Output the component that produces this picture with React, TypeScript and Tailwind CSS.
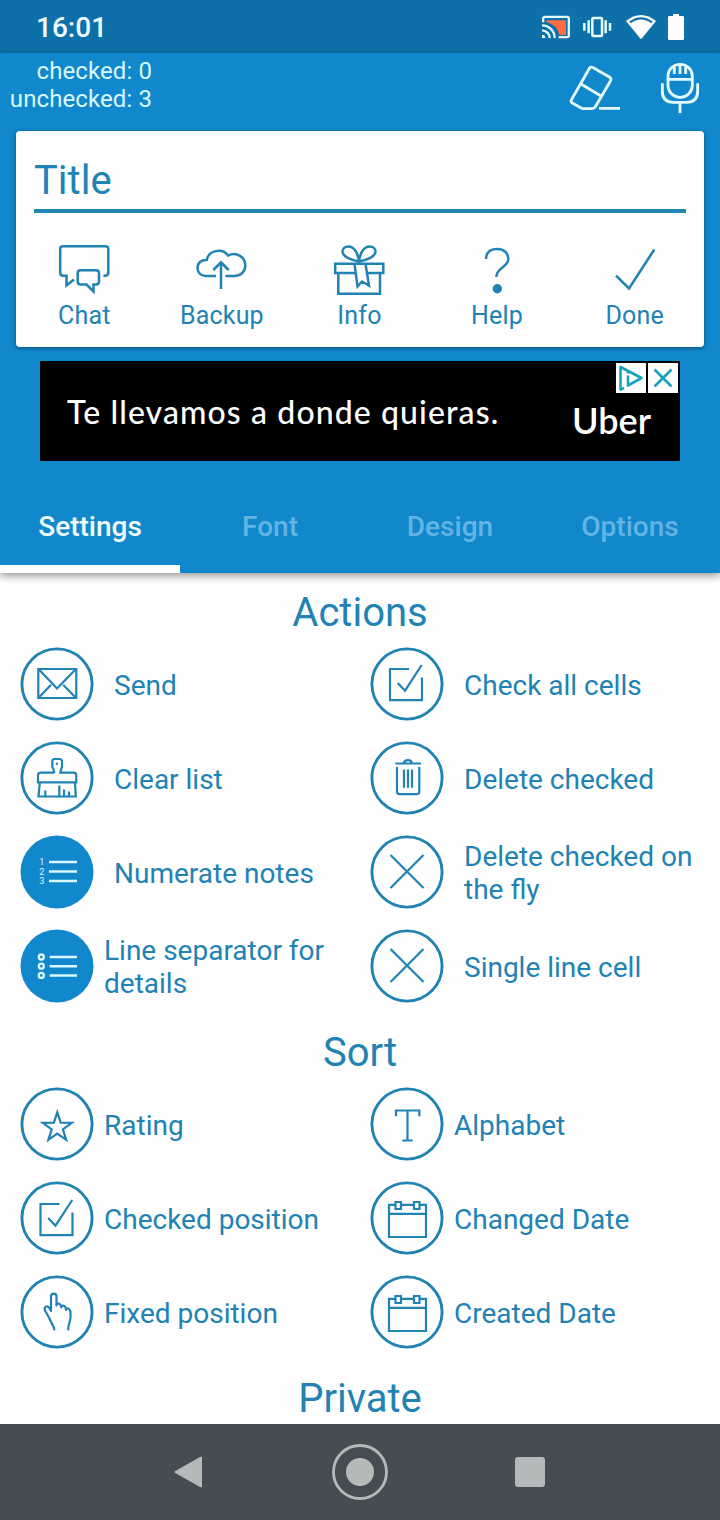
import type { ReactNode } from "react";

const Stroke = ({ children }: { children: ReactNode }) => (
  <g fill="none" stroke="currentColor" strokeWidth="2.200">
    {children}
  </g>
);

const CastIcon = () => (
  <svg className="h-6 w-7" viewBox="66 42 84 72">
    <path d="M80 58H138V102H118A50 50 0 0 0 80 64Z" fill="#ff6b42" />
    <g fill="none" stroke="#e6fbff" strokeWidth="7">
      <path d="M69.500 64V53Q69.500 47.500 75 47.500H141Q146.500 47.500 146.500 53V103Q146.500 108.500 141 108.500H116" />
      <path d="M66 73A38 38 0 0 1 104 111M66 88A23 23 0 0 1 89 111" />
    </g>
    <path d="M66 101A10 10 0 0 1 76 111H66Z" fill="#e6fbff" />
  </svg>
);

const VibrateIcon = () => (
  <svg className="h-6 w-[30px]" viewBox="186 42 90 72">
    <g fill="none" stroke="#e6fbff" strokeWidth="7.500">
      <rect x="217" y="51" width="29" height="54" rx="3" />
      <path d="M206 58V97M193 66V89M257 58V97M270 66V89" />
    </g>
  </svg>
);

const WifiIcon = () => (
  <svg className="h-6 w-[30px]" viewBox="318 42 90 72">
    <path d="M318 60Q363 24 408 60L363 115Z" fill="#fff" />
    <path d="M330 64Q363 40 396 64" fill="none" stroke="#0e70a9" strokeWidth="7" />
  </svg>
);

const BatteryIcon = () => (
  <svg className="h-[26px] w-4" viewBox="444 39 48 78">
    <path d="M459 39H477V45H488Q492 45 492 49V113Q492 117 488 117H448Q444 117 444 113V49Q444 45 448 45H459Z" fill="#fff" />
  </svg>
);

const EraserIcon = () => (
  <svg className="h-12 w-[52px]" viewBox="147 192 156 144" fill="none" stroke="#e3fbff" strokeWidth="8.500" strokeLinejoin="round">
    <path d="M220 203L268 231Q276 236 271 244L226 320Q223 326 216 326H190Q186 326 182 323L157 309Q151 305 155 298L207 207Q212 198 220 203ZM183 252L243 288M237 325H300" />
  </svg>
);

const MicIcon = () => (
  <svg className="h-[52px] w-[42px]" viewBox="417 186 126 156" fill="none" stroke="#e3fbff" strokeWidth="8.500">
    <rect x="444" y="193" width="73" height="99" rx="36" />
    <path d="M444 238H517M463 200V222M480 194V222M497 200V222" />
    <path d="M427 250V274Q427 307 460 307H500Q533 307 533 274V250M480 307V339" />
  </svg>
);

const ToolIcon = ({ children }: { children: ReactNode }) => (
  <svg className="-ml-0.5 size-[60px]" viewBox="0 0 60 60" fill="none" stroke="currentColor" strokeWidth="2.500">
    {children}
  </svg>
);

const tools: { label: string; icon: ReactNode }[] = [
  {
    label: "Chat",
    icon: (
      <path d="M49.500 35.700H51Q54.300 35.700 54.300 32.500V9Q54.300 6.200 51.300 6.200H9Q6.200 6.200 6.200 9V32.500Q6.200 35.700 9 35.700H12.500V45.500L20 39.500M26.500 30.300H42Q45 30.300 45 33.300V41.500Q45 44.500 42 44.500H39.500V51.500L32.500 44.500H26.500Q23.700 44.500 23.700 41.500V33.300Q23.700 30.300 26.500 30.300Z" />
    ),
  },
  {
    label: "Backup",
    icon: (
      <path d="M25 36H14.500C9.500 36 6.500 32 6.500 28C6.500 23 10 19.800 15.700 20C17 14 22 10.700 28 10.700C32 10.700 35 12.500 37 15.500C46 11.500 54.300 17 54.300 25.500C54.300 32 49.500 36 43.500 36H34.500M30 49V22.500M22.300 30L30 22.300L37.700 30" />
    ),
  },
  {
    label: "Info",
    icon: (
      <path d="M26.500 23.700H6.200V33H26.500M36 23.700H54.300V33H38M9.300 33V53.700H51V33M30 21.500C22 20 13.500 16.500 13.500 11.500C13.500 8.500 16 6.500 19.500 6.500C25 6.500 29 13 30 21.500C31 13 35 6.500 40.500 6.500C44 6.500 46.500 8.500 46.500 11.500C46.500 16.500 38 20 30 21.500M24 23.700H38M25.500 24L28.500 46.500L33 41.500L40 45.500L36.500 24" />
    ),
  },
  {
    label: "Help",
    icon: (
      <>
        <path d="M19 19C19 12.500 23.500 9 30.200 9C37 9 41.300 13 41.300 19C41.300 27 29.300 27.500 29.300 37" />
        <circle cx="30.300" cy="48.700" r="4.700" fill="currentColor" stroke="none" />
      </>
    ),
  },
  { label: "Done", icon: <path d="M12 35.700L25 48.500L50.300 9.500" /> },
];

const SendIcon = () => (
  <Stroke>
    <path d="M18.300 22H56.300V51H18.300ZM18.500 22L37 41.500L56 22M18.500 51L31 37.800M56 51L43.200 37.800" />
  </Stroke>
);
const BrushIcon = () => (
  <Stroke>
    <path d="M34.500 31.700Q33.500 28 32.300 26V20.500Q32.300 18 34.500 18H39.500Q42 18 42 20.500V26Q41 28 40.300 31.700H53.500Q56.300 31.700 56.300 34.500V41.300H18V34.500Q18 31.700 20.800 31.700H34.500M19.800 41.500L18.500 55.500H55.800L55 41.500M25.300 49.500V55M39.300 44.500V55M44 48.500V55M49 50.500V55M37 21.800V23.800" />
  </Stroke>
);
const CheckIcon = () => (
  <Stroke>
    <path d="M39 22H20V53.200H52V30.500M27.700 36L35 43.700L51.700 18" />
  </Stroke>
);
const TrashIcon = () => (
  <Stroke>
    <path d="M25.300 22.500H51M34 22C34.500 18.200 41.300 18.200 41.900 22M27 26V50.500Q27 53.200 29.700 53.200H46.500Q49.300 53.200 49.300 50.500V26M34 28.500V46.700M38 28.500V46.700M42 28.500V46.700" />
  </Stroke>
);
const CrossIcon = () => (
  <Stroke>
    <path d="M20.500 20L53.500 53M53.500 20L20.500 53" />
  </Stroke>
);
const NumberedIcon = () => (
  <>
    <path d="M29 27H57M29 36.500H57M29 46H57" stroke="#d9f8ff" strokeWidth="2.700" />
    <g fill="#d9f8ff" fontFamily="Roboto, sans-serif" fontSize="9" textAnchor="middle">
      <text x="21.700" y="30">1</text>
      <text x="21.700" y="39.500">2</text>
      <text x="21.700" y="49">3</text>
    </g>
  </>
);
const BulletsIcon = () => (
  <g fill="none" stroke="#d9f8ff">
    <path d="M29.700 28H57M29.700 37.200H57M29.700 46.400H57" strokeWidth="2.500" />
    <g strokeWidth="2.300">
      <circle cx="21.300" cy="28" r="2.500" />
      <circle cx="21.300" cy="37.200" r="2.500" />
      <circle cx="21.300" cy="46.400" r="2.500" />
    </g>
  </g>
);
const StarIcon = () => (
  <Stroke>
    <path d="M37.300 25.300L40.700 35.600L51.800 35.800L42.900 42.300L46.200 52.800L37.300 46.500L28.400 52.800L31.700 42.300L22.800 35.800L33.900 35.600Z" />
  </Stroke>
);
const LetterIcon = () => (
  <Stroke>
    <path d="M26 29.300V23.500H49.300V29.300M37.500 23.500V53.500M32.300 53.500H42.700" />
  </Stroke>
);
const ShiftedCheckIcon = () => (
  <g transform="translate(0.500 1)">
    <CheckIcon />
  </g>
);
const HandIcon = () => (
  <Stroke>
    <path
      strokeLinecap="round"
      strokeLinejoin="round"
      d="M34.300 54.500C34 51 31 48 29 42.500L25 35.500C23.500 31.500 27.500 30 29.300 33L31 36V21.500C31 17.800 36.500 17.800 36.500 21.500V30.500M36.500 29.500C38.500 27.500 41 29 41.300 32.500M41.300 31.500C43.500 29.500 46 31.500 46 35M46 34C48.500 32 50.500 35 50.500 38C51.500 47 48 48 48.300 54.500"
    />
  </Stroke>
);
const CalendarIcon = () => (
  <Stroke>
    <path d="M25.500 23.800H19V56H56V23.800H49.700M31 23.800H43.800M19 32.800H56M25.500 21H31V28H25.500ZM44 21H49.500V28H44Z" />
  </Stroke>
);

type Item = { label: string; icon: ReactNode; filled?: boolean; near?: boolean; tall?: boolean };

const actions: Item[] = [
  { label: "Send", icon: <SendIcon /> },
  { label: "Check all cells", icon: <CheckIcon /> },
  { label: "Clear list", icon: <BrushIcon /> },
  { label: "Delete checked", icon: <TrashIcon /> },
  { label: "Numerate notes", icon: <NumberedIcon />, filled: true },
  { label: "Delete checked on the fly", icon: <CrossIcon />, tall: true },
  { label: "Line separator for details", icon: <BulletsIcon />, filled: true, near: true, tall: true },
  { label: "Single line cell", icon: <CrossIcon /> },
];

const sorts: Item[] = [
  { label: "Rating", icon: <StarIcon />, near: true },
  { label: "Alphabet", icon: <LetterIcon />, near: true },
  { label: "Checked position", icon: <ShiftedCheckIcon />, near: true },
  { label: "Changed Date", icon: <CalendarIcon />, near: true },
  { label: "Fixed position", icon: <HandIcon />, near: true },
  { label: "Created Date", icon: <CalendarIcon />, near: true },
];

const ItemGrid = ({ items }: { items: Item[] }) => (
  <div className="grid grid-cols-[350px_340px] pt-px pl-5">
    {items.map((item) => (
      <div key={item.label} className="flex h-[94px] items-center">
        <svg className="size-[74px] shrink-0" viewBox="0 0 74 74">
          {item.filled ? (
            <circle cx="37" cy="37" r="36.500" fill="#1188cb" />
          ) : (
            <circle cx="37" cy="37" r="35.100" fill="none" stroke="currentColor" strokeWidth="2.900" />
          )}
          {item.icon}
        </svg>
        <span
          className={`text-[28px] leading-[33px] ${item.near ? "w-[240px] pl-2.5" : "w-[256px] pl-5"} ${item.tall ? "pt-px" : "pt-[3px]"}`}
        >
          {item.label}
        </span>
      </div>
    ))}
  </div>
);

const Heading = ({ children }: { children: ReactNode }) => (
  <h2 className="text-center text-[40px] leading-[47px]">{children}</h2>
);

const tabs = ["Settings", "Font", "Design", "Options"];

export default function App() {
  return (
    <div className="flex h-[1520px] w-[720px] flex-col overflow-hidden bg-[#fefefe] font-['Roboto',sans-serif] text-[#2182b4]">
      <div className="flex h-[53px] shrink-0 items-center justify-between bg-[#0e70a9] pr-9 pl-9">
        <span className="pt-0.5 text-[28px] font-medium text-[#eefcff]">16:01</span>
        <div className="flex items-center">
          <CastIcon />
          <div className="ml-3"><VibrateIcon /></div>
          <div className="ml-3.5"><WifiIcon /></div>
          <div className="ml-3"><BatteryIcon /></div>
        </div>
      </div>

      <header className="relative z-10 h-[520px] shrink-0 bg-[#1188cb] shadow-[0_3px_8px_rgba(0,0,0,0.4)]">
        <div className="flex h-[78px] justify-between">
          <div className="w-[152px] pt-1 text-right text-2xl leading-7 tracking-[0.1px] whitespace-nowrap text-[#d9f8ff]">
            <div>checked: 0</div>
            <div>unchecked: 3</div>
          </div>
          <div className="flex items-start gap-[38px] pr-[19px]">
            <div className="pt-[11px]"><EraserIcon /></div>
            <div className="pt-[9px]"><MicIcon /></div>
          </div>
        </div>

        <section className="mx-4 h-[216px] rounded bg-[#fefefe] shadow-[0_1px_4px_rgba(0,0,0,0.45)]">
          <div className="mx-[18px] h-[82px] border-b-4 border-[#2583b2] pt-[26px] text-[40px] leading-[47px]">Title</div>
          <div className="grid grid-cols-5 pt-[27px]">
            {tools.map((tool) => (
              <div key={tool.label} className="flex flex-col items-center">
                <ToolIcon>{tool.icon}</ToolIcon>
                <span className="-ml-px pt-px text-[25px] leading-[30px] tracking-[0.2px]">{tool.label}</span>
              </div>
            ))}
          </div>
        </section>

        <div className="relative mx-10 mt-3.5 flex h-[100px] items-center bg-black text-white">
          <span className="ml-[27px] w-[506px] pt-0.5 font-['Lato',sans-serif] text-[32px] font-medium tracking-[1.1px] whitespace-nowrap">Te llevamos a donde quieras.</span>
          <span className="-ml-px pt-[17px] font-['Lato',sans-serif] text-[36px] font-semibold">Uber</span>
          <div className="absolute top-0.5 right-0.5 flex gap-0.5">
            <svg className="size-[30px] bg-white" viewBox="0 0 30 30" fill="none" stroke="#18a3bd" strokeWidth="2.600" strokeLinejoin="round">
              <path d="M8 25L4.500 26.500V4L25.500 15L12 22.500V12.500M12 8V10.500" />
            </svg>
            <svg className="size-[30px] bg-white" viewBox="0 0 30 30" fill="none" stroke="#18a3bd" strokeWidth="2.700">
              <path d="M6.500 6.500L23.500 23.500M23.500 6.500L6.500 23.500" />
            </svg>
          </div>
        </div>

        <nav className="mt-5 grid h-[92px] grid-cols-4">
          {tabs.map((tab, i) => (
            <div
              key={tab}
              className={
                i === 0
                  ? "border-b-8 border-white pt-[29px] text-center text-[28px] leading-[33px] font-medium text-[#f2fdff]"
                  : "pt-[29px] text-center text-[28px] leading-[33px] font-medium text-[#64b4e3]"
              }
            >
              {tab}
            </div>
          ))}
        </nav>
      </header>

      <main className="h-[851px] shrink-0 overflow-hidden pt-4">
        <Heading>Actions</Heading>
        <ItemGrid items={actions} />
        <div className="pt-4">
          <Heading>Sort</Heading>
        </div>
        <ItemGrid items={sorts} />
        <div className="pt-4">
          <Heading>Private</Heading>
        </div>
      </main>

      <footer className="flex h-24 shrink-0 items-center bg-[#454d52] pl-[174px] text-[#b5b9ba]">
        <svg className="h-8 w-7" viewBox="0 0 28 32" fill="currentColor" stroke="currentColor" strokeWidth="2" strokeLinejoin="round">
          <path d="M1.500 16L27 1.500V30.500Z" />
        </svg>
        <svg className="ml-[130px] size-14" viewBox="0 0 56 56">
          <circle cx="28" cy="28" r="26.500" fill="none" stroke="currentColor" strokeWidth="2.800" />
          <circle cx="28" cy="28" r="14" fill="currentColor" />
        </svg>
        <div className="ml-[127px] size-[30px] rounded-[3px] bg-[#b5b9ba]" />
      </footer>
    </div>
  );
}
